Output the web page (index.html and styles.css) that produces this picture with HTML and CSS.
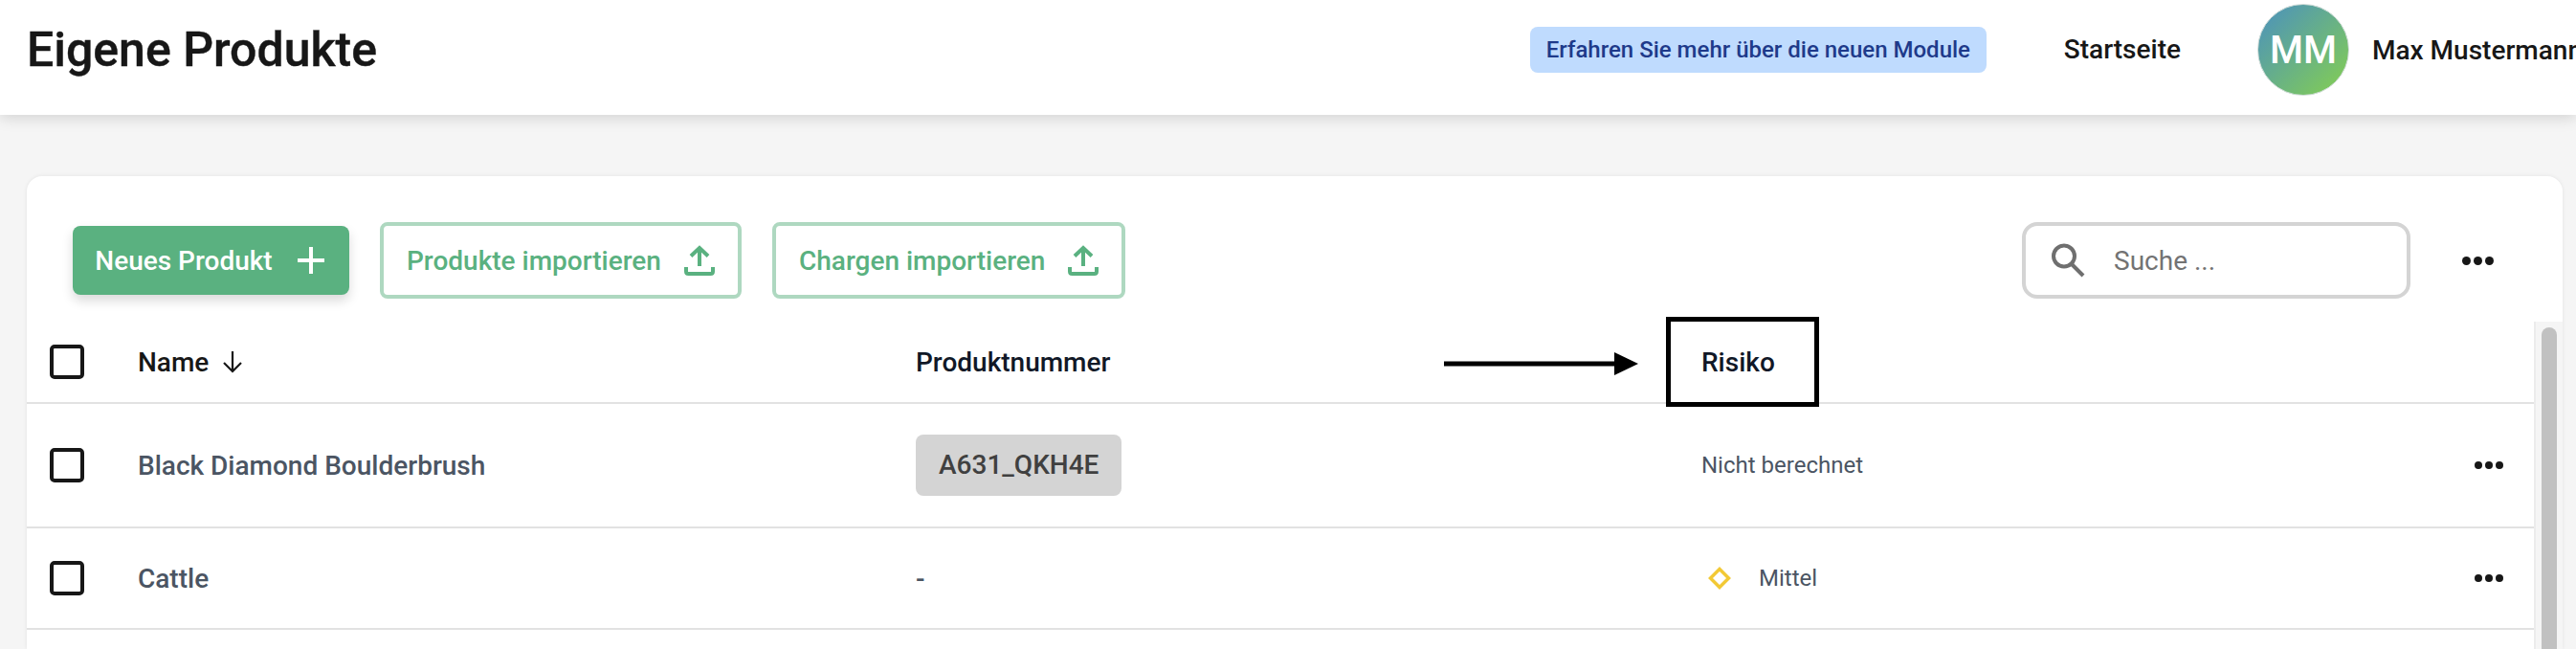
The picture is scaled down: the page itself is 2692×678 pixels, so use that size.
FILE: index.html
```html
<!DOCTYPE html>
<html lang="de">
<head>
<meta charset="utf-8">
<title>Eigene Produkte</title>
<link rel="stylesheet" href="styles.css">
</head>
<body>
<header class="topbar">
  <h1 class="title">Eigene Produkte</h1>
  <a class="pill">Erfahren Sie mehr über die neuen Module</a>
  <a class="nav-link">Startseite</a>
  <div class="avatar">MM</div>
  <span class="user">Max Mustermann</span>
</header>
<main class="main">
  <section class="card">
    <div class="toolbar">
      <button class="btn btn-primary">Neues Produkt
        <svg class="icon-plus" viewBox="0 0 28 28"><path d="M14 0V28M0 14H28" stroke="#fff" stroke-width="4" fill="none"/></svg>
      </button>
      <button class="btn btn-outline">Produkte importieren
        <svg class="icon-upload" viewBox="0 0 32 32"><path d="M16 22V4M7 11.500L16 3L25 11.500M2 23V27.500Q2 30 4.500 30H27.500Q30 30 30 27.500V23" stroke="#5ab180" stroke-width="4" fill="none"/></svg>
      </button>
      <button class="btn btn-outline">Chargen importieren
        <svg class="icon-upload" viewBox="0 0 32 32"><path d="M16 22V4M7 11.500L16 3L25 11.500M2 23V27.500Q2 30 4.500 30H27.500Q30 30 30 27.500V23" stroke="#5ab180" stroke-width="4" fill="none"/></svg>
      </button>
      <div class="search">
        <svg class="icon-search" viewBox="0 0 36 36"><circle cx="14" cy="13.500" r="11" stroke="#6f6f6f" stroke-width="4" fill="none"/><path d="M22 22L34 34" stroke="#6f6f6f" stroke-width="4" fill="none"/></svg>
        <span class="search-text">Suche ...</span>
      </div>
      <div class="dots dots-top"><i></i><i></i><i></i></div>
    </div>
    <div class="table-wrap">
      <div class="table">
        <div class="row row-head">
          <span class="checkbox"></span>
          <span class="head-name">Name
            <svg class="icon-sort" viewBox="0 0 22 24"><path d="M11 1V22M2 13L11 22L20 13" stroke="#171717" stroke-width="2.200" fill="none"/></svg>
          </span>
          <span class="head-cell">Produktnummer</span>
          <span class="head-cell">Risiko</span>
          <span></span>
        </div>
        <div class="row row-a">
          <span class="checkbox"></span>
          <span class="name">Black Diamond Boulderbrush</span>
          <span><span class="badge">A631_QKH4E</span></span>
          <span class="risk">Nicht berechnet</span>
          <div class="dots"><i></i><i></i><i></i></div>
        </div>
        <div class="row row-b">
          <span class="checkbox"></span>
          <span class="name">Cattle</span>
          <span class="dash">-</span>
          <span class="risk risk-level">
            <svg class="icon-diamond" viewBox="0 0 24 24"><path d="M12 2.500L21.500 12L12 21.500L2.500 12Z" stroke="#f2c935" stroke-width="3.500" fill="none"/></svg>
            Mittel
          </span>
          <div class="dots"><i></i><i></i><i></i></div>
        </div>
      </div>
      <div class="scroll"><div class="thumb"></div></div>
    </div>
    <svg class="note-arrow" viewBox="0 0 204 26"><path d="M0 13H180" stroke="#000" stroke-width="5"/><path d="M178 1L203 13L178 25Z" fill="#000"/></svg>
    <div class="note-box"></div>
  </section>
</main>
</body>
</html>
```
FILE: styles.css
```css
* { box-sizing: border-box; }
html, body { margin: 0; height: 100%; }
body {
  background: #f5f5f5;
  font-family: Roboto, "Liberation Sans", sans-serif;
  color: #171717;
  overflow: hidden;
}
.topbar {
  height: 120px;
  background: #fff;
  display: flex;
  align-items: center;
  padding-left: 28px;
  box-shadow: 0 4px 14px rgba(0,0,0,.13);
  white-space: nowrap;
  position: relative;
}
.title { margin: 0 auto 16px 0; font-size: 50px; font-weight: 500; line-height: 1; color: #171717; -webkit-text-stroke: 0.4px #171717; }
.pill {
  height: 48px; width: 477px; margin-bottom: 16px;
  background: #bfdbfe; color: #1e3a8a;
  border-radius: 8px;
  font-size: 24px; font-weight: 500; line-height: 48px; text-align: center;
}
.nav-link { margin: 0 80px 16px 81px; font-size: 28px; font-weight: 500; line-height: 48px; }
.avatar {
  width: 96px; height: 96px; border-radius: 50%; margin-bottom: 16px; flex: none;
  background: linear-gradient(135deg, #4a90c0, #85d04f);
  border: 1px solid #d0dcd8;
  color: #fff; font-size: 40px; font-weight: 500;
  display: flex; align-items: center; justify-content: center;
}
.user { flex: none; width: 213px; overflow: hidden; margin: 0 0 16px 24px; font-size: 28px; font-weight: 500; }
.main { padding: 64px 14px 0 28px; }
.card {
  position: relative;
  background: #fff;
  border-radius: 16px 16px 0 0;
  height: 494px;
  overflow: hidden;
  box-shadow: 0 0 4px rgba(0,0,0,.08);
}
.toolbar { display: flex; align-items: center; height: 80px; margin: 48px 0 0; padding-left: 48px; }
.btn {
  font-family: inherit; font-size: 28px; font-weight: 500;
  display: flex; align-items: center; justify-content: center;
  border-radius: 8px; padding: 0; white-space: nowrap;
}
.btn-primary {
  width: 289px; height: 72px; gap: 26px; padding-right: 3px; color: #fff; background: #5ab180;
  border: 0; box-shadow: 0 6px 12px rgba(0,0,0,.15); margin-right: 32px;
}
.btn-outline {
  height: 80px; gap: 24px; color: #5ab180; background: #fff;
  border: 4px solid #aed8c0; padding: 0 24px;
  margin-right: 32px;
}
.icon-plus { width: 28px; height: 28px; }
.icon-upload { width: 32px; height: 32px; }
.search {
  margin-left: auto; width: 406px; height: 80px;
  border: 4px solid #d4d4d4; border-radius: 16px;
  display: flex; align-items: center; padding-left: 26px;
}
.icon-search { width: 36px; height: 36px; }
.search-text { margin-left: 30px; font-size: 28px; color: #737373; }
.dots { display: flex; gap: 3px; justify-content: flex-end; }
.dots i { width: 8px; height: 8px; border-radius: 50%; background: #171717; }
.dots-top { margin: 0 72px 0 54px; }
.dots-top i { width: 9px; height: 9px; }
.table-wrap { display: flex; height: 342px; margin-top: 24px; }
.table { flex: 1; }
.row {
  display: grid;
  grid-template-columns: 116px 813px 821px 1fr 60px;
  align-items: center;
  border-bottom: 2px solid #e2e2e2;
  padding-right: 32px;
}
.row > .checkbox { margin-left: 24px; }
.row-head { height: 86px; }
.row-a { height: 130px; }
.row-b { height: 106px; }
.checkbox { width: 36px; height: 36px; border: 4px solid #171717; border-radius: 5px; }
.head-name, .head-cell { font-size: 28px; font-weight: 500; }
.head-name { display: flex; align-items: center; gap: 14px; color: #171717; }
.head-cell { color: #111827; }
.icon-sort { width: 22px; height: 24px; }
.name { font-size: 28px; font-weight: 500; color: #4b5563; }
.badge {
  display: inline-block; height: 64px; line-height: 64px; padding: 0 24px; min-width: 215px; text-align: center;
  background: #d4d4d4; color: #404040; border-radius: 8px;
  font-size: 28px; font-weight: 500;
}
.dash { font-size: 28px; font-weight: 500; color: #4b5563; }
.risk { font-size: 24px; color: #4b5563; }
.risk-level { display: flex; align-items: center; gap: 29px; padding-left: 7px; }
.icon-diamond { width: 24px; height: 24px; }
.scroll { width: 30px; background: #f5f5f5; border-left: 2px solid #ececec; padding: 6px 6px 0 6px; }
.thumb { height: 100%; background: #c1c1c1; border-radius: 8px 8px 0 0; }
.note-arrow { position: absolute; left: 1481px; top: 183px; width: 204px; height: 26px; }
.note-box { position: absolute; left: 1713px; top: 147px; width: 160px; height: 94px; border: 5px solid #000; }
```
